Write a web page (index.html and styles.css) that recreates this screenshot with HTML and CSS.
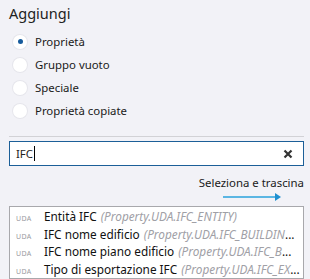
FILE: index.html
```html
<!DOCTYPE html>
<html>
<head>
<meta charset="utf-8">
<link rel="stylesheet" href="styles.css">
</head>
<body>
<div class="panel">
  <div class="title">Aggiungi</div>
  <div class="radios">
    <div class="radio"><span class="circle checked"></span><span>Proprietà</span></div>
    <div class="radio"><span class="circle"></span><span>Gruppo vuoto</span></div>
    <div class="radio"><span class="circle"></span><span>Speciale</span></div>
    <div class="radio"><span class="circle"></span><span>Proprietà copiate</span></div>
  </div>
  <div class="sep"></div>
  <div class="search">
    <span class="query">IFC</span><span class="caret"></span>
    <svg class="clear" width="10" height="10" viewBox="0 0 10 10"><path d="M1.5 1.5 L8.5 8.5 M8.5 1.5 L1.5 8.5" stroke="#333" stroke-width="2.2" stroke-linecap="butt"/></svg>
  </div>
  <div class="hint">
    <span>Seleziona e trascina</span>
    <svg class="arrow" width="58" height="8" viewBox="0 0 58 8"><line x1="0" y1="4" x2="52" y2="4" stroke="#5bb6e3" stroke-width="2"/><path d="M52 0 L58 4 L52 8 Z" fill="#1f8fd0"/></svg>
  </div>
  <div class="list">
    <div class="row"><span class="tag">UDA</span><span class="name">Entità IFC</span><span class="path">(Property.UDA.IFC_ENTITY)</span></div>
    <div class="row"><span class="tag">UDA</span><span class="name">IFC nome edificio</span><span class="path">(Property.UDA.IFC_BUILDIN</span><span class="dots">...</span></div>
    <div class="row"><span class="tag">UDA</span><span class="name">IFC nome piano edificio</span><span class="path">(Property.UDA.IFC_B</span><span class="dots">...</span></div>
    <div class="row"><span class="tag">UDA</span><span class="name">Tipo di esportazione IFC</span><span class="path">(Property.UDA.IFC_EX</span><span class="dots">...</span></div>
  </div>
</div>
</body>
</html>
```
FILE: styles.css
```css
html, body {
  margin: 0;
  padding: 0;
  background: #f2f2f7;
}
body {
  font-family: "Noto Sans", "Open Sans", sans-serif;
  font-size: 11.4px;
  color: #1a1a1a;
  width: 310px;
  height: 279px;
  overflow: hidden;
}
.panel {
  padding: 3px 6px 0 9px;
  display: flex;
  flex-direction: column;
}
.title {
  font-size: 14.5px;
  line-height: 20px;
  color: #222;
}
.radios {
  display: flex;
  flex-direction: column;
  margin-top: 7px;
}
.radio {
  display: flex;
  align-items: center;
  height: 23px;
  gap: 8px;
  padding-left: 4px;
}
.circle {
  width: 14px;
  height: 14px;
  border-radius: 50%;
  background: #fff;
  box-shadow: 0 0 0 1px #e6e6ec;
  display: flex;
  align-items: center;
  justify-content: center;
}
.circle.checked::after {
  content: "";
  width: 5px;
  height: 5px;
  border-radius: 50%;
  background: #165b9c;
}
.sep {
  height: 1px;
  background: #d2d2d6;
  margin-top: 14px;
}
.search {
  margin-top: 4px;
  height: 23px;
  border: 1px solid #1c5f98;
  background: #fff;
  display: flex;
  align-items: center;
  padding-left: 6px;
  padding-right: 10px;
}
.query {
  color: #222;
}
.caret {
  width: 1px;
  height: 15px;
  background: #000;
  margin-left: 1px;
}
.clear {
  margin-left: auto;
}
.hint {
  display: flex;
  flex-direction: column;
  align-items: flex-end;
  margin-top: 9px;
}
.hint span {
  line-height: 16px;
}
.arrow {
  margin-right: 23px;
  margin-top: 2px;
}
.list {
  margin-top: 5px;
  border: 1px solid #a8a8ac;
  background: #fff;
  padding: 1px 0 0 6px;
  display: flex;
  flex-direction: column;
  font-size: 11.8px;
}
.row {
  display: flex;
  align-items: baseline;
  height: 17.5px;
  line-height: 17.5px;
  white-space: nowrap;
  overflow: hidden;
}
.tag {
  font-size: 7px;
  color: #9a9aa0;
  width: 28px;
  letter-spacing: 0.3px;
}
.name {
  color: #111;
  margin-right: 4px;
}
.path {
  color: #a0a0a6;
  font-style: italic;
}
.dots {
  color: #111;
}
```
